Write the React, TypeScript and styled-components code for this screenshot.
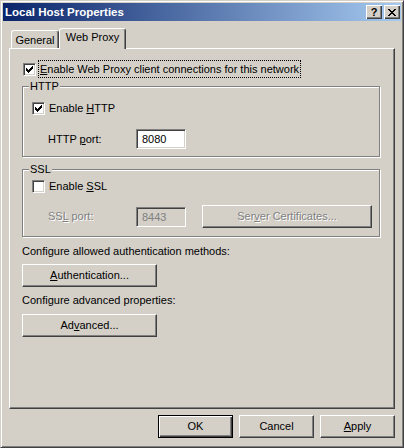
import React from "react";
import styled, { createGlobalStyle } from "styled-components";

const Global = createGlobalStyle`
  html, body { margin: 0; padding: 0; background: #D4D0C8; }
  body { font-family: "Liberation Sans", Arial, sans-serif; font-size: 11px; }
  * { box-sizing: border-box; }
`;

const Window = styled.div`
  width: 404px;
  height: 448px;
  background: #d4d0c8;
  border: 1px solid;
  border-color: #d4d0c8 #404040 #404040 #d4d0c8;
  box-shadow: inset 1px 1px 0 #fff, inset -1px -1px 0 #808080;
  padding: 2px;
  display: flex;
  flex-direction: column;
  color: #000;
  font: 11px/13px "Liberation Sans", Arial, sans-serif;
`;

const TitleBar = styled.div`
  height: 18px;
  flex: none;
  display: flex;
  align-items: center;
  padding: 0 1px 0 2px;
  background: linear-gradient(to right, #0a246a, #a6caf0);
`;

const Title = styled.div`
  flex: 1;
  color: #fff;
  font-weight: bold;
  font-size: 11.5px;
  line-height: 13px;
`;

const CaptionButtons = styled.div`
  display: flex;
  gap: 2px;
`;

const CaptionButton = styled.div`
  width: 16px;
  height: 14px;
  background: #d4d0c8;
  box-shadow: inset 1px 1px 0 #fff, inset -1px -1px 0 #404040,
    inset -2px -2px 0 #808080;
  display: flex;
  align-items: center;
  justify-content: center;
  font-weight: bold;
  font-size: 11px;
  line-height: 12px;
  color: #000;
`;

const Body = styled.div`
  flex: 1;
  display: flex;
  flex-direction: column;
  padding: 7px 6px 0 6px;
`;

const TabStrip = styled.div`
  display: flex;
  align-items: flex-end;
  height: 20px;
  padding-left: 2px;
`;

const Tab = styled.div<{ $active?: boolean; $w: number }>`
  width: ${(p) => p.$w}px;
  height: ${(p) => (p.$active ? 21 : 18)}px;
  margin-bottom: ${(p) => (p.$active ? -1 : 0)}px;
  background: #d4d0c8;
  border-top: 1px solid #fff;
  border-left: 1px solid #fff;
  border-right: 1px solid #404040;
  border-radius: 3px 3px 0 0;
  box-shadow: inset -1px 0 0 #808080;
  text-align: center;
  padding-top: ${(p) => (p.$active ? 2 : 3)}px;
  position: relative;
  z-index: ${(p) => (p.$active ? 1 : 0)};
`;

const Panel = styled.div`
  width: 386px;
  height: 361px;
  border-top: 1px solid #fff;
  border-left: 1px solid #fff;
  border-right: 1px solid #404040;
  border-bottom: 1px solid #404040;
  box-shadow: inset -1px -1px 0 #808080;
  padding: 11px 13px 0 12px;
  display: flex;
  flex-direction: column;
  align-items: flex-start;
`;

const CheckRow = styled.div<{ $mt: number; $ml?: number; $h?: number }>`
  display: flex;
  align-items: center;
  height: ${(p) => p.$h ?? 17}px;
  margin-top: ${(p) => p.$mt}px;
  margin-left: ${(p) => p.$ml ?? 0}px;
  gap: 4px;
`;

const Box = styled.span`
  width: 13px;
  height: 13px;
  flex: none;
  background: #fff;
  border: 1px solid;
  border-color: #808080 #fff #fff #808080;
  box-shadow: inset 1px 1px 0 #404040, inset -1px -1px 0 #d4d0c8;
  padding: 2px;
  display: block;
  svg { display: block; }
`;

const FocusLabel = styled.span`
  height: 18px;
  line-height: 16px;
  border: 1px dotted #000;
  padding: 0 1px;
  margin-left: -2px;
`;

const Group = styled.fieldset<{ $mt: number }>`
  margin: ${(p) => p.$mt}px 0 0 0;
  padding: 0;
  min-width: 0;
  width: 358px;
  border: 1px solid #808080;
  box-shadow: 1px 1px 0 #fff, inset 1px 1px 0 #fff;
`;

const Legend = styled.legend`
  margin-left: 6px;
  padding: 0 1px;
  line-height: 13px;
  background: #d4d0c8;
`;

const GroupBody = styled.div<{ $pb: number }>`
  display: flex;
  flex-direction: column;
  padding: 0 0 ${(p) => p.$pb}px 9px;
`;

const FieldRow = styled.div<{ $mt: number; $h: number }>`
  display: flex;
  align-items: center;
  height: ${(p) => p.$h}px;
  margin-top: ${(p) => p.$mt}px;
  padding-left: 16px;
`;

const FieldLabel = styled.span<{ $disabled?: boolean }>`
  width: 88px;
  color: ${(p) => (p.$disabled ? "#808080" : "#000")};
  text-shadow: ${(p) => (p.$disabled ? "1px 1px 0 #fff" : "none")};
`;

const TextBox = styled.div<{ $disabled?: boolean }>`
  width: 50px;
  height: 20px;
  background: ${(p) => (p.$disabled ? "#d4d0c8" : "#fff")};
  color: ${(p) => (p.$disabled ? "#808080" : "#000")};
  border: 1px solid;
  border-color: #808080 #fff #fff #808080;
  box-shadow: inset 1px 1px 0 #404040, inset -1px -1px 0 #d4d0c8;
  padding: 0 5px;
  line-height: 18px;
`;

const Button = styled.button<{ $w: number; $default?: boolean; $ml?: number }>`
  width: ${(p) => p.$w}px;
  height: 23px;
  flex: none;
  margin: 0 0 0 ${(p) => p.$ml ?? 0}px;
  padding: 0;
  background: #d4d0c8;
  font: 11px/13px "Liberation Sans", Arial, sans-serif;
  color: ${(p) => (p.disabled ? "#808080" : "#000")};
  text-shadow: ${(p) => (p.disabled ? "1px 1px 0 #fff" : "none")};
  border: 1px solid;
  border-color: ${(p) =>
    p.$default ? "#000" : "#fff #404040 #404040 #fff"};
  box-shadow: ${(p) =>
    p.$default
      ? "inset 1px 1px 0 #fff, inset -1px -1px 0 #404040, inset -2px -2px 0 #808080"
      : "inset -1px -1px 0 #808080"};
`;

const Caption = styled.div<{ $mt: number }>`
  margin-top: ${(p) => p.$mt}px;
  line-height: 13px;
`;

const PanelButton = styled(Button)<{ $mt: number }>`
  margin-top: ${(p) => p.$mt}px;
`;

const Footer = styled.div`
  display: flex;
  justify-content: flex-end;
  gap: 6px;
  margin-top: 6px;
`;

const U = styled.span`
  text-decoration: underline;
  text-underline-offset: 1px;
`;

const Check = () => (
  <svg width="7" height="7" viewBox="0 0 7 7" shapeRendering="crispEdges">
    <path
      fill="#000"
      d="M0 2h1v3H0z M1 3h1v3H1z M2 4h1v3H2z M3 3h1v3H3z M4 2h1v3H4z M5 1h1v3H5z M6 0h1v3H6z"
    />
  </svg>
);

const CloseGlyph = () => (
  <svg width="8" height="7" viewBox="0 0 8 7" shapeRendering="crispEdges">
    <path
      fill="#000"
      d="M0 0h2v1H0z M6 0h2v1H6z M1 1h2v1H1z M5 1h2v1H5z M2 2h4v1H2z M3 3h2v1H3z M2 4h4v1H2z M1 5h2v1H1z M5 5h2v1H5z M0 6h2v1H0z M6 6h2v1H6z"
    />
  </svg>
);

export default function App() {
  return (
    <>
      <Global />
      <Window>
        <TitleBar>
          <Title>Local Host Properties</Title>
          <CaptionButtons>
            <CaptionButton>?</CaptionButton>
            <CaptionButton>
              <CloseGlyph />
            </CaptionButton>
          </CaptionButtons>
        </TitleBar>
        <Body>
          <TabStrip>
            <Tab $w={48}>General</Tab>
            <Tab $w={67} $active>
              Web Proxy
            </Tab>
          </TabStrip>
          <Panel>
            <CheckRow $mt={0} $ml={1} $h={18}>
              <Box>
                <Check />
              </Box>
              <FocusLabel>
                <U>E</U>nable Web Proxy client connections for this network
              </FocusLabel>
            </CheckRow>

            <Group $mt={2}>
              <Legend>HTTP</Legend>
              <GroupBody $pb={7}>
                <CheckRow $mt={7}>
                  <Box>
                    <Check />
                  </Box>
                  <span>
                    Enable <U>H</U>TTP
                  </span>
                </CheckRow>
                <FieldRow $mt={12} $h={20}>
                  <FieldLabel>
                    HTTP <U>p</U>ort:
                  </FieldLabel>
                  <TextBox>8080</TextBox>
                </FieldRow>
              </GroupBody>
            </Group>

            <Group $mt={6}>
              <Legend>SSL</Legend>
              <GroupBody $pb={8}>
                <CheckRow $mt={2}>
                  <Box />
                  <span>
                    Enable <U>S</U>SL
                  </span>
                </CheckRow>
                <FieldRow $mt={10} $h={23}>
                  <FieldLabel $disabled>
                    SS<U>L</U> port:
                  </FieldLabel>
                  <TextBox $disabled>8443</TextBox>
                  <Button $w={170} $ml={16} disabled>
                    Ser<U>v</U>er Certificates...
                  </Button>
                </FieldRow>
              </GroupBody>
            </Group>

            <Caption $mt={8}>Configure allowed authentication methods:</Caption>
            <PanelButton $w={135} $mt={6}>
              <U>A</U>uthentication...
            </PanelButton>
            <Caption $mt={7}>Configure advanced properties:</Caption>
            <PanelButton $w={135} $mt={7}>
              Ad<U>v</U>anced...
            </PanelButton>
          </Panel>
          <Footer>
            <Button $w={75} $default>
              OK
            </Button>
            <Button $w={75}>Cancel</Button>
            <Button $w={75}>
              <U>A</U>pply
            </Button>
          </Footer>
        </Body>
      </Window>
    </>
  );
}
